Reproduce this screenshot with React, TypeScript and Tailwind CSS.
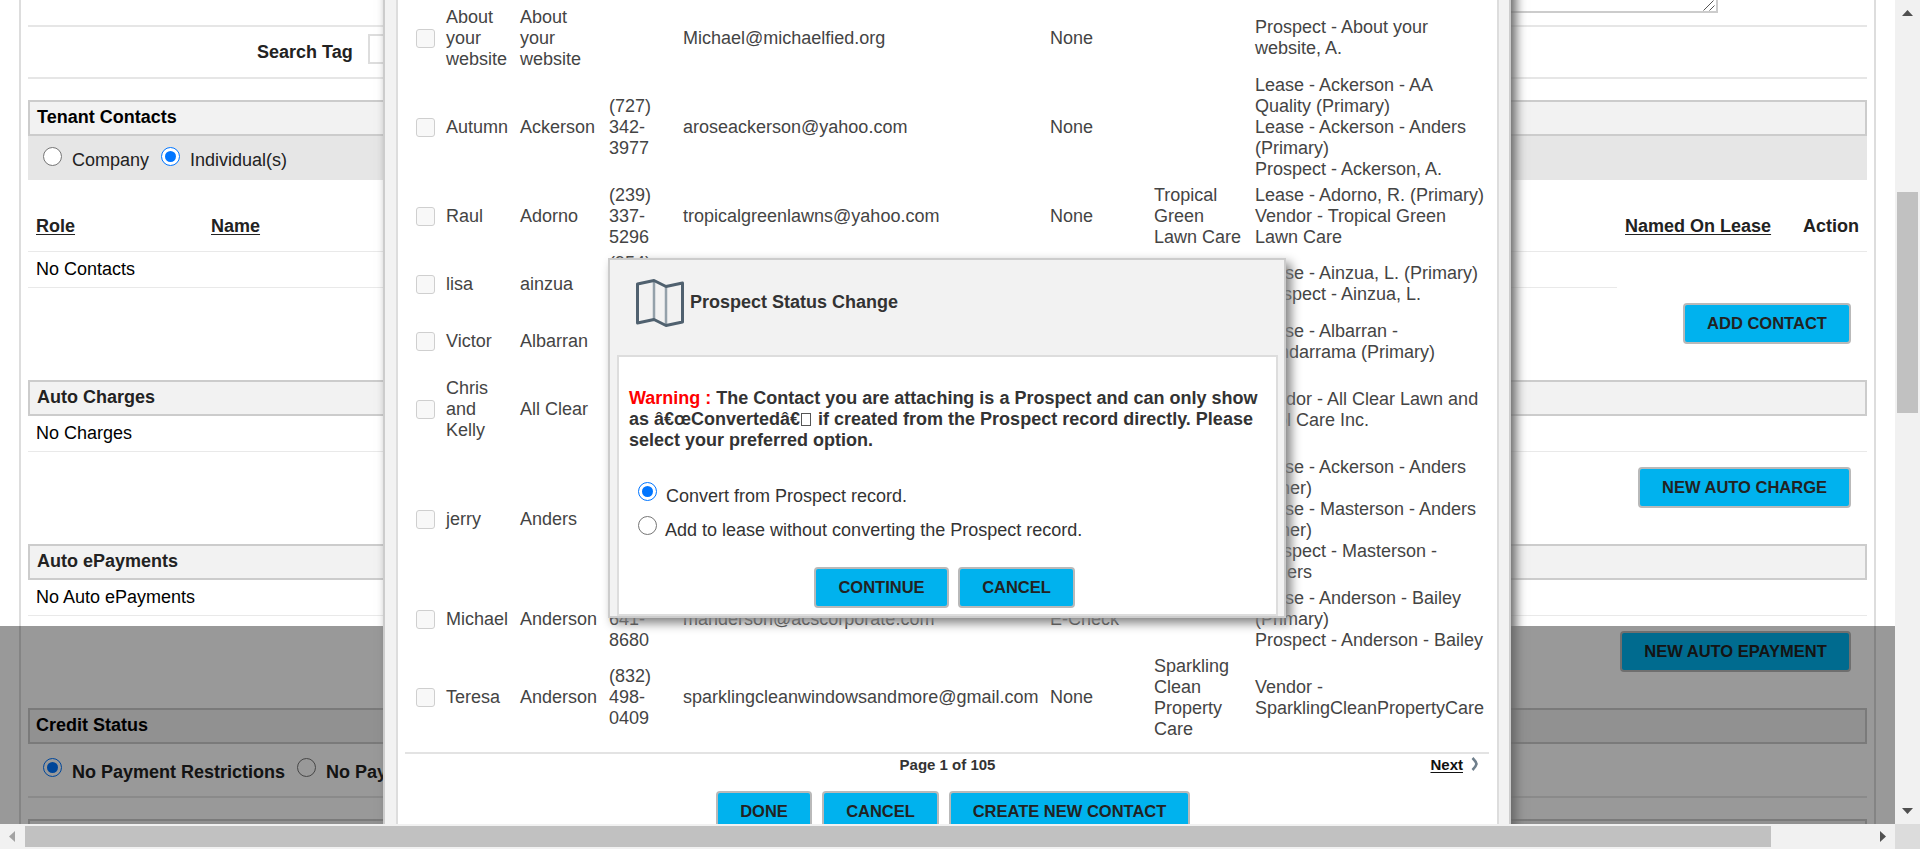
import React from "react";

type Contact = {
  first: string[];
  last: string[];
  phone: string[];
  email: string;
  pay: string;
  company: string[];
  assoc: string[];
  height: string;
};

const contacts: Contact[] = [
  { first: ["About", "your", "website"], last: ["About", "your", "website"], phone: [], email: "Michael@michaelfied.org", pay: "None", company: [], assoc: ["Prospect - About your", "website, A."], height: "h-[68px]" },
  { first: ["Autumn"], last: ["Ackerson"], phone: ["(727)", "342-", "3977"], email: "aroseackerson@yahoo.com", pay: "None", company: [], assoc: ["Lease - Ackerson - AA", "Quality (Primary)", "Lease - Ackerson - Anders", "(Primary)", "Prospect - Ackerson, A."], height: "h-[110px]" },
  { first: ["Raul"], last: ["Adorno"], phone: ["(239)", "337-", "5296"], email: "tropicalgreenlawns@yahoo.com", pay: "None", company: ["Tropical", "Green", "Lawn Care"], assoc: ["Lease - Adorno, R. (Primary)", "Vendor - Tropical Green", "Lawn Care"], height: "h-[68px]" },
  { first: ["lisa"], last: ["ainzua"], phone: ["(954)", "", ""], email: "", pay: "", company: [], assoc: ["Lease - Ainzua, L. (Primary)", "Prospect - Ainzua, L."], height: "h-[68px]" },
  { first: ["Victor"], last: ["Albarran"], phone: [], email: "", pay: "", company: [], assoc: ["Lease - Albarran -", "Gandarrama (Primary)"], height: "h-[47px]" },
  { first: ["Chris", "and", "Kelly"], last: ["All Clear"], phone: [], email: "", pay: "", company: [], assoc: ["Vendor - All Clear Lawn and", "Pool Care Inc."], height: "h-[89px]" },
  { first: ["jerry"], last: ["Anders"], phone: [], email: "", pay: "", company: [], assoc: ["Lease - Ackerson - Anders", "(Other)", "Lease - Masterson - Anders", "(Other)", "Prospect - Masterson -", "Anders"], height: "h-[131px]" },
  { first: ["Michael"], last: ["Anderson"], phone: ["", "641-", "8680"], email: "manderson@acscorporate.com", pay: "E-Check", company: [], assoc: ["Lease - Anderson - Bailey", "(Primary)", "Prospect - Anderson - Bailey"], height: "h-[68px]" },
  { first: ["Teresa"], last: ["Anderson"], phone: ["(832)", "498-", "0409"], email: "sparklingcleanwindowsandmore@gmail.com", pay: "None", company: ["Sparkling", "Clean", "Property", "Care"], assoc: ["Vendor -", "SparklingCleanPropertyCare"], height: "h-[89px]" },
];

function Lines({ items }: { items: string[] }) {
  return (
    <div>
      {items.map((t, i) => (
        <div key={i} className="h-[21px]">{t}</div>
      ))}
    </div>
  );
}

function Radio({ checked = false, dim = false }: { checked?: boolean; dim?: boolean }) {
  return (
    <span
      className={`flex h-[19px] w-[19px] shrink-0 items-center justify-center rounded-full border ${
        checked ? "border-[#0075ff]" : "border-[#767676]"
      } ${dim ? "" : "bg-white"}`}
    >
      {checked && <span className="h-[11px] w-[11px] rounded-full bg-[#0075ff]" />}
    </span>
  );
}

function Button({ label, className }: { label: string; className: string }) {
  return (
    <button
      className={`h-[41px] shrink-0 rounded-[4px] border-2 border-[#b9b9b9] bg-[#00b2ee] text-center text-[16.5px] leading-[37px] font-bold text-[#222] ${className}`}
    >
      {label}
    </button>
  );
}

function SectionBar({ title, className = "" }: { title: string; className?: string }) {
  return (
    <div className={`h-9 shrink-0 border-2 border-[#ccc] bg-[#f2f2f2] leading-[30px] font-bold ${className}`}>
      {title}
    </div>
  );
}

function LeasePage() {
  return (
    <div className="mx-[19px] h-full w-[1857px] border-x-2 border-[#ddd] px-[7px] text-[#222]">
      <div className="flex h-[824px] flex-col overflow-hidden">
        <div className="flex h-[27px] shrink-0 items-start justify-end border-b-2 border-[#e6e6e6] pr-[149px]">
          <div className="flex h-[13px] w-[400px] items-end justify-end border-r-2 border-b-2 border-[#ccc]">
            <svg width="13" height="11" viewBox="0 0 13 11" stroke="#555" strokeWidth="1">
              <path d="M0.5 10.5L10.5 0.5M6.5 10.5L11.5 5.5" fill="none" />
            </svg>
          </div>
        </div>
        <div className="flex h-[52px] shrink-0 border-b-2 border-[#e6e6e6] pl-[229px] pt-[7px]">
          <div className="w-[111px] pt-[8px] font-bold">Search Tag</div>
          <div className="h-[30px] w-[300px] border-2 border-[#ddd]" />
        </div>
        <SectionBar title="Tenant Contacts" className="mt-[21px] pl-[7px] text-black" />
        <div className="flex h-[44px] shrink-0 bg-[#e6e6e6] pl-[15px] pt-[11px]">
          <Radio checked={false} />
          <div className="w-[99px] pl-[10px] pt-[3px]">Company</div>
          <Radio checked />
          <div className="pl-[10px] pt-[3px]">Individual(s)</div>
        </div>
        <div className="flex h-[72px] shrink-0 border-b border-[#e9e9e9] pt-[36px] font-bold">
          <div className="w-[175px] pl-2 underline underline-offset-2">Role</div>
          <div className="w-[1422px] pl-2 underline underline-offset-2">Name</div>
          <div className="w-[178px] underline underline-offset-2">Named On Lease</div>
          <div>Action</div>
        </div>
        <div className="h-9 w-[1589px] shrink-0 border-b border-[#e9e9e9] pl-2 pt-[7px] text-black">No Contacts</div>
        <div className="flex h-[92px] shrink-0 justify-end pr-4 pt-[15px]">
          <Button label="ADD CONTACT" className="w-[168px]" />
        </div>
        <SectionBar title="Auto Charges" className="pl-[7px]" />
        <div className="h-9 shrink-0 border-b border-[#e9e9e9] pl-2 pt-[7px] text-black">No Charges</div>
        <div className="flex h-[92px] shrink-0 justify-end pr-4 pt-[15px]">
          <Button label="NEW AUTO CHARGE" className="w-[213px]" />
        </div>
        <SectionBar title="Auto ePayments" className="pl-[7px]" />
        <div className="h-9 shrink-0 border-b border-[#e9e9e9] pl-2 pt-[7px] text-black">No Auto ePayments</div>
        <div className="flex h-[92px] shrink-0 justify-end pr-4 pt-[15px]">
          <Button label="NEW AUTO EPAYMENT" className="w-[231px]" />
        </div>
        <SectionBar title="Credit Status" className="pl-[6px] text-black" />
        <div className="flex h-[54px] shrink-0 border-b-2 border-[#e6e6e6] pl-[15px] pt-[14px] font-bold">
          <Radio checked />
          <div className="w-[235px] pl-[10px] pt-[4px]">No Payment Restrictions</div>
          <Radio dim />
          <div className="pl-[10px] pt-[4px]">No Payments</div>
        </div>
        <SectionBar title="" className="mt-[21px]" />
      </div>
    </div>
  );
}

function ContactRow({ c }: { c: Contact }) {
  return (
    <div className={`grid shrink-0 grid-cols-[30px_74px_89px_74px_367px_104px_101px_1fr] items-center whitespace-nowrap pl-[11px] ${c.height}`}>
      <span className="h-[19px] w-[19px] rounded-[3px] border border-[#cfcfcf] bg-[#f8f8f8]" />
      <Lines items={c.first} />
      <Lines items={c.last} />
      <Lines items={c.phone} />
      <div>{c.email}</div>
      <div>{c.pay}</div>
      <Lines items={c.company} />
      <Lines items={c.assoc} />
    </div>
  );
}

function ContactPicker() {
  return (
    <div className="absolute top-0 left-[383px] h-[824px] w-[1128px] overflow-hidden border-x-2 border-[#ccc] bg-[#f2f2f2] pr-[10px] pl-[11px]">
      <div className="flex h-full flex-col border-x-2 border-[#ddd] bg-white pr-[8px] pl-[7px] pt-[4px] text-[#444]">
        {contacts.map((c, i) => (
          <ContactRow key={i} c={c} />
        ))}
        <div className="mt-[10px] h-0.5 shrink-0 bg-[#e3e3e3]" />
        <div className="grid h-[37px] shrink-0 grid-cols-[1fr_auto_1fr] pl-[1px] text-[15px] font-bold text-[#333]">
          <div />
          <div>Page 1 of 105</div>
          <div className="flex justify-end pr-[10px] text-[#111]">
            <span className="underline underline-offset-2">Next</span>
            <svg className="mt-[3px] ml-[8px]" width="8" height="14" viewBox="0 0 8 14">
              <path d="M1.5 1Q5 4.500 5.500 7Q5 9.500 1.500 13" fill="none" stroke="#6f7f8c" strokeWidth="2.600" />
            </svg>
          </div>
        </div>
        <div className="flex justify-center gap-[10px] pl-[12px]">
          <Button label="DONE" className="w-[96px]" />
          <Button label="CANCEL" className="w-[117px]" />
          <Button label="CREATE NEW CONTACT" className="w-[241px]" />
        </div>
      </div>
    </div>
  );
}

function StatusDialog() {
  return (
    <div className="absolute top-[258px] left-[608px] flex h-[360px] w-[678px] flex-col border-2 border-[#ccc] bg-[#f2f2f2] pr-[6px] pl-[7px] text-[#333] shadow-[5px_5px_10px_#808080]">
      <div className="flex h-[95px] shrink-0 pl-[19px] pt-[19px]">
        <svg width="48" height="48" viewBox="0 0 48 48" fill="none">
          <path d="M18 2V41M30 7V46" stroke="#94a1aa" strokeWidth="2.500" />
          <path d="M1.500 5L18 1.500L30 7.500L46.500 4V43L30 46.500L18 40.500L1.500 44Z" stroke="#50616f" strokeWidth="3" strokeLinejoin="round" />
        </svg>
        <div className="pl-[6px] pt-[13px] font-bold">Prospect Status Change</div>
      </div>
      <div className="h-[261px] border-2 border-[#ddd] bg-white pt-[31px] pl-[10px] whitespace-nowrap">
        <div className="font-bold">
          <div><span className="text-[#f00]">Warning :</span> The Contact you are attaching is a Prospect and can only show</div>
          <div className="flex">
            <span>as â€œConvertedâ€</span>
            <span className="mt-[4px] mr-[7px] ml-[1px] h-[13px] w-[10px] border border-[#555]" />
            <span>if created from the Prospect record directly. Please</span>
          </div>
          <div>select your preferred option.</div>
        </div>
        <div className="mt-[31px] flex h-[34px] pl-[9px]">
          <Radio checked />
          <div className="pl-[9px] pt-[4px]">Convert from Prospect record.</div>
        </div>
        <div className="flex h-[52px] pl-[9px]">
          <Radio />
          <div className="pl-[8px] pt-[4px]">Add to lease without converting the Prospect record.</div>
        </div>
        <div className="-mt-[1px] flex gap-[9px] pl-[185px]">
          <Button label="CONTINUE" className="w-[135px]" />
          <Button label="CANCEL" className="w-[117px]" />
        </div>
      </div>
    </div>
  );
}

export default function App() {
  return (
    <div className="flex h-[849px] w-[1920px] flex-col overflow-hidden bg-white font-['Liberation_Sans',Arial,sans-serif] text-[18px] leading-[21px]">
      <div className="flex h-[824px]">
        <div className="relative h-[824px] w-[1895px] overflow-hidden">
          <LeasePage />
          <div className="absolute top-[626px] left-0 h-[198px] w-full bg-black/40" />
          <div className="absolute top-[-20px] left-[383px] h-[900px] w-[1128px] shadow-[5px_5px_10px_#666]" />
          <ContactPicker />
          <StatusDialog />
        </div>
        <div className="flex w-[25px] flex-col items-center bg-[#f1f1f1]">
          <svg className="mt-[10px]" width="11" height="6" viewBox="0 0 11 6"><path d="M0 6L5.500 0L11 6Z" fill="#505050" /></svg>
          <div className="mt-[176px] h-[221px] w-[21px] bg-[#c1c1c1]" />
          <svg className="mt-[395px]" width="11" height="6" viewBox="0 0 11 6"><path d="M0 0L5.500 6L11 0Z" fill="#505050" /></svg>
        </div>
      </div>
      <div className="flex h-[25px] items-center bg-[#f1f1f1]">
        <svg className="ml-[9px]" width="6" height="11" viewBox="0 0 6 11"><path d="M6 0L0 5.500L6 11Z" fill="#a3a3a3" /></svg>
        <div className="ml-[10px] h-[21px] w-[1746px] bg-[#c1c1c1]" />
        <svg className="ml-[109px]" width="6" height="11" viewBox="0 0 6 11"><path d="M0 0L6 5.500L0 11Z" fill="#505050" /></svg>
        <div className="ml-[9px] h-[25px] w-[25px] bg-[#dcdcdc]" />
      </div>
    </div>
  );
}
